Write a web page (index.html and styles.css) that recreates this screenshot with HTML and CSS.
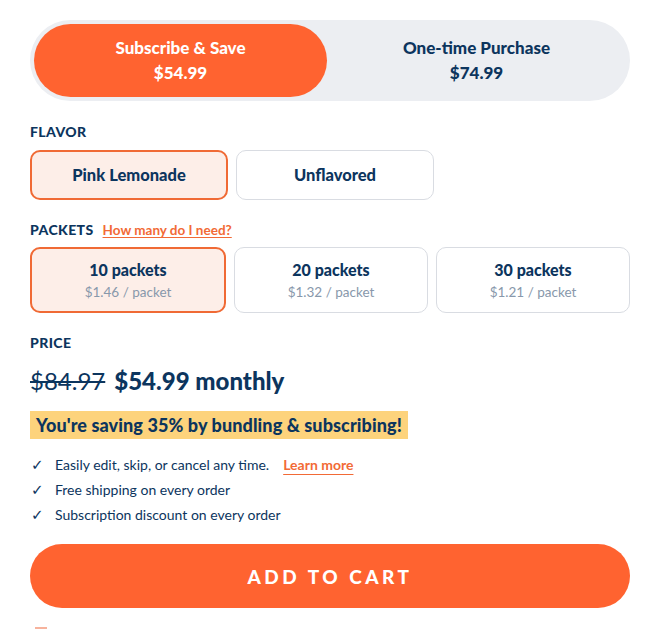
FILE: index.html
```html
<html>
    <head>
        <title>Subscribe</title>
        <link rel="stylesheet" href="styles.css">
    </head>
    <body>
        <div class="product">
            <div class="purchaseToggle">
                <div class="toggleOption active">
                    <span>Subscribe &amp; Save</span>
                    <span>$54.99</span>
                </div>
                <div class="toggleOption">
                    <span>One-time Purchase</span>
                    <span>$74.99</span>
                </div>
            </div>

            <div class="label">FLAVOR</div>
            <div class="flavorRow">
                <div class="choice selected">Pink Lemonade</div>
                <div class="choice">Unflavored</div>
            </div>

            <div class="label packetsLabel">PACKETS <a class="helpLink" href="#">How many do I need?</a></div>
            <div class="packetRow">
                <div class="choice packet selected">
                    <span class="packetName">10 packets</span>
                    <span class="packetPrice">$1.46 / packet</span>
                </div>
                <div class="choice packet">
                    <span class="packetName">20 packets</span>
                    <span class="packetPrice">$1.32 / packet</span>
                </div>
                <div class="choice packet">
                    <span class="packetName">30 packets</span>
                    <span class="packetPrice">$1.21 / packet</span>
                </div>
            </div>

            <div class="label">PRICE</div>
            <div class="priceLine">
                <span class="oldPrice">$84.97</span>
                <span class="newPrice">$54.99 monthly</span>
            </div>

            <div class="savings">You're saving 35% by bundling &amp; subscribing!</div>

            <ul class="perks">
                <li><span class="tick">&#10003;</span>Easily edit, skip, or cancel any time. <a href="#" class="learnMore">Learn more</a></li>
                <li><span class="tick">&#10003;</span>Free shipping on every order</li>
                <li><span class="tick">&#10003;</span>Subscription discount on every order</li>
            </ul>

            <button class="addToCart">ADD TO CART</button>
            <div class="giftBox"></div>
        </div>
    </body>
</html>
```

FILE: styles.css
```css
body {
    margin: 0;
    background-color: #ffffff;
    font-family: Lato, "Noto Sans", sans-serif;
    color: #0c355e;
}

.product {
    padding: 20px 20px 0 30px;
    width: 600px;
}

.purchaseToggle {
    display: flex;
    background-color: #eceef2;
    border-radius: 41px;
    padding: 4px;
    height: 73px;
}

.toggleOption {
    flex: 1;
    display: flex;
    flex-direction: column;
    justify-content: center;
    align-items: center;
    gap: 4px;
    font-size: 17px;
    font-weight: 900;
    color: #0c355e;
    border-radius: 37px;
    padding-bottom: 2px;
    box-sizing: border-box;
}

.toggleOption.active {
    flex: 0 0 293px;
    background-color: #ff6330;
    color: #ffffff;
}

.label {
    font-size: 14px;
    line-height: 16px;
    font-weight: 900;
    letter-spacing: 0.4px;
    margin: 23px 0 10px 0;
    display: flex;
    align-items: baseline;
    gap: 9px;
}

.label.packetsLabel {
    margin: 22px 0 9px 0;
}

.packetRow + .label {
    margin-top: 22px;
}

.helpLink {
    color: #f26a36;
    font-weight: bold;
    font-size: 13.5px;
    letter-spacing: 0;
    text-underline-offset: 2px;
}

.flavorRow {
    display: flex;
    gap: 8px;
}

.choice {
    box-sizing: border-box;
    border: 1px solid #d9dce2;
    border-radius: 10px;
    background-color: #ffffff;
    display: flex;
    justify-content: center;
    align-items: center;
    font-size: 16.5px;
    font-weight: 900;
}

.flavorRow .choice {
    width: 198px;
    height: 50px;
}

.choice.selected {
    border: 2px solid #f06a35;
    background-color: #fdeee8;
}

.packetRow {
    display: flex;
    gap: 8px;
}

.choice.packet {
    flex: 1;
    height: 66px;
    flex-direction: column;
    gap: 5px;
}

.packetName {
    font-size: 16px;
}

.packetPrice {
    font-size: 13.5px;
    font-weight: normal;
    color: #8898ab;
}

.priceLine {
    display: flex;
    gap: 9px;
    align-items: baseline;
    font-size: 24px;
    margin-top: 15px;
}

.oldPrice {
    text-decoration: line-through;
    font-weight: normal;
}

.newPrice {
    font-weight: 900;
}

.savings {
    display: inline-block;
    margin-top: 16px;
    background-color: #fdd37c;
    padding: 3px 6px;
    font-size: 18px;
    font-weight: 900;
    letter-spacing: 0.1px;
}

.perks {
    list-style: none;
    padding: 0;
    margin: 13px 0 0 0;
    font-size: 14px;
}

.perks li {
    height: 25px;
    display: flex;
    align-items: center;
}

.tick {
    width: 24px;
    padding-left: 1px;
    font-size: 15px;
    font-family: "DejaVu Sans", sans-serif;
    font-weight: bold;
}

.learnMore {
    color: #f26a36;
    font-weight: bold;
    margin-left: 14px;
    text-underline-offset: 4px;
}

.addToCart {
    display: block;
    width: 600px;
    height: 64px;
    margin-top: 17px;
    border: none;
    border-radius: 32px;
    background-color: #ff6330;
    color: #ffffff;
    font-family: Lato, sans-serif;
    font-size: 19px;
    font-weight: 900;
    letter-spacing: 3.5px;
}

.giftBox {
    width: 12px;
    height: 6px;
    margin: 19px 0 0 5px;
    border-top: 2px solid #f7b39d;
}
```
